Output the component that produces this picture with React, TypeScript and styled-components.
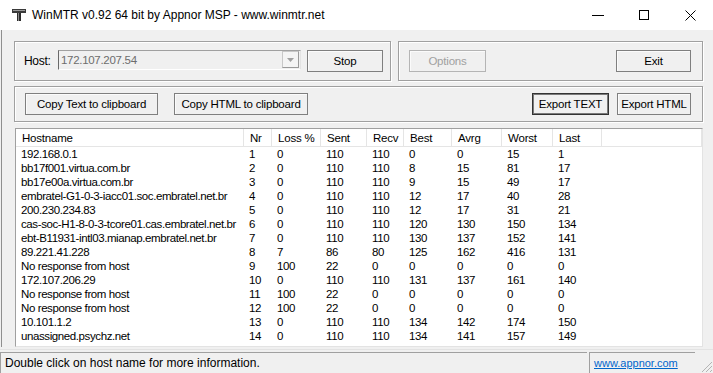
import styled, { createGlobalStyle } from "styled-components";

const GlobalStyle = createGlobalStyle`
  html, body {
    margin: 0;
    padding: 0;
    background: #ffffff;
  }
  * {
    box-sizing: border-box;
  }
`;

const Window = styled.div`
  width: 713px;
  height: 373px;
  overflow: hidden;
  display: flex;
  flex-direction: column;
  background: #f0f0f0;
  font-family: "Liberation Sans", Arial, sans-serif;
  font-size: 11px;
  color: #000;
`;

const TitleBar = styled.div`
  height: 30px;
  flex: none;
  display: flex;
  align-items: center;
  background: #ffffff;
`;

const TitleIcon = styled.svg`
  margin-left: 11px;
  width: 16px;
  height: 14px;
  flex: none;
`;

const TitleText = styled.span`
  margin-left: 5px;
  font-size: 12px;
  flex: 1;
  white-space: nowrap;
`;

const CaptionButton = styled.div`
  width: 46px;
  height: 30px;
  display: flex;
  align-items: center;
  justify-content: center;
  flex: none;
`;

const Body = styled.div`
  flex: 1;
  display: flex;
  flex-direction: column;
  margin-left: 1px;
  border-left: 1px solid #8f8f8f;
  padding: 11px 0 0 12px;
`;

const Row = styled.div<{ $gap?: number; $mb: number }>`
  display: flex;
  gap: ${(p) => p.$gap ?? 0}px;
  margin-bottom: ${(p) => p.$mb}px;
`;

const Group = styled.div<{ $w: number; $h: number; $pl: number; $pr: number }>`
  width: ${(p) => p.$w}px;
  height: ${(p) => p.$h}px;
  display: flex;
  align-items: center;
  padding: 0 ${(p) => p.$pr}px 0 ${(p) => p.$pl}px;
  border: 1px solid #a0a0a0;
  box-shadow: inset 1px 1px 0 #ffffff, 1px 1px 0 #ffffff;
`;

const Label = styled.span`
  width: 34px;
  flex: none;
  font-size: 12px;
  letter-spacing: -0.3px;
`;

const Combo = styled.div`
  width: 243px;
  height: 20px;
  margin-top: -3px;
  display: flex;
  align-items: center;
  background: #f0f0f0;
  border-top: 1px solid #a0a0a0;
  border-left: 1px solid #696969;
  border-right: 1px solid #e3e3e3;
  border-bottom: 1px solid #ffffff;
  color: #6d6d6d;
  font-size: 11.5px;
  letter-spacing: -0.3px;
  padding-left: 2px;
`;

const ComboText = styled.span`
  flex: 1;
`;

const ComboArrow = styled.div`
  width: 17px;
  height: 17px;
  margin-right: 1px;
  display: flex;
  align-items: center;
  justify-content: center;
  border: 1px solid #c8c8c8;
  border-right-color: #9a9a9a;
  border-bottom-color: #9a9a9a;
  background: #f4f4f4;
`;

const Button = styled.div<{ $w: number; $ml?: number; $default?: boolean; $disabled?: boolean }>`
  width: ${(p) => p.$w}px;
  height: 22px;
  margin-left: ${(p) => p.$ml ?? 0}px;
  flex: none;
  display: flex;
  align-items: center;
  justify-content: center;
  background: #f0f0f0;
  border: 1px solid ${(p) => (p.$default ? "#333333" : p.$disabled ? "#b4b4b4" : "#7f7f7f")};
  box-shadow: ${(p) => (p.$default ? "inset 0 0 0 1px #7a7a7a" : "inset 1px 1px 0 #fbfbfb")};
  color: ${(p) => (p.$disabled ? "#a0a0a0" : "#000")};
  font-size: 11.5px;
  letter-spacing: -0.2px;
  white-space: nowrap;
`;

const Spacer = styled.div`
  flex: 1;
`;

const List = styled.div`
  width: 688px;
  height: 219px;
  margin-left: 1px;
  background: #ffffff;
  border-top: 1px solid #a0a0a0;
  border-left: 1px solid #a0a0a0;
  border-right: 1px solid #e3e3e3;
  border-bottom: 1px solid #e3e3e3;
  overflow: hidden;
  font-size: 11.5px;
  letter-spacing: -0.4px;
`;

const cols = "228px 28px 49px 46px 37px 48px 50px 51px 49px 1fr";

const HeaderRow = styled.div`
  display: grid;
  grid-template-columns: ${cols};
  height: 18px;
  border-bottom: 1px solid #e5e5e5;
  letter-spacing: -0.2px;
`;

const HeaderCell = styled.div`
  padding-left: 6px;
  display: flex;
  align-items: center;
  border-right: 1px solid #e5e5e5;
  white-space: nowrap;
`;

const DataRow = styled.div`
  display: grid;
  grid-template-columns: ${cols};
  height: 14px;
  line-height: 14px;
`;

const Cell = styled.div`
  padding-left: 5px;
  white-space: nowrap;
`;

const StatusBar = styled.div`
  margin-top: 2px;
  height: 24px;
  flex: none;
  display: flex;
  align-items: stretch;
  border-top: 1px solid #e3e3e3;
  padding-top: 2px;
  font-size: 12px;
`;

const StatusPanel = styled.div<{ $w: number }>`
  width: ${(p) => p.$w}px;
  flex: none;
  display: flex;
  align-items: center;
  padding: 0 0 0 4px;
  margin-right: 2px;
  border-top: 1px solid #a0a0a0;
  border-left: 1px solid #a0a0a0;
`;

const Link = styled.span`
  color: #0066cc;
  text-decoration: underline;
  font-size: 11px;
`;

const Grip = styled.svg`
  margin-left: auto;
  align-self: flex-end;
  width: 14px;
  height: 14px;
`;

const rows = [
  ["192.168.0.1", "1", "0", "110", "110", "0", "0", "15", "1"],
  ["bb17f001.virtua.com.br", "2", "0", "110", "110", "8", "15", "81", "17"],
  ["bb17e00a.virtua.com.br", "3", "0", "110", "110", "9", "15", "49", "17"],
  ["embratel-G1-0-3-iacc01.soc.embratel.net.br", "4", "0", "110", "110", "12", "17", "40", "28"],
  ["200.230.234.83", "5", "0", "110", "110", "12", "17", "31", "21"],
  ["cas-soc-H1-8-0-3-tcore01.cas.embratel.net.br", "6", "0", "110", "110", "120", "130", "150", "134"],
  ["ebt-B11931-intl03.mianap.embratel.net.br", "7", "0", "110", "110", "130", "137", "152", "141"],
  ["89.221.41.228", "8", "7", "86", "80", "125", "162", "416", "131"],
  ["No response from host", "9", "100", "22", "0", "0", "0", "0", "0"],
  ["172.107.206.29", "10", "0", "110", "110", "131", "137", "161", "140"],
  ["No response from host", "11", "100", "22", "0", "0", "0", "0", "0"],
  ["No response from host", "12", "100", "22", "0", "0", "0", "0", "0"],
  ["10.101.1.2", "13", "0", "110", "110", "134", "142", "174", "150"],
  ["unassigned.psychz.net", "14", "0", "110", "110", "134", "141", "157", "149"],
];

const headers = ["Hostname", "Nr", "Loss %", "Sent", "Recv", "Best", "Avrg", "Worst", "Last", ""];

export default function App() {
  return (
    <>
      <GlobalStyle />
      <Window>
        <TitleBar>
          <TitleIcon viewBox="0 0 16 14">
            <rect x="1" y="1" width="14" height="4" fill="#3a3a3a" />
            <rect x="2" y="2" width="12" height="1" fill="#9a9a9a" />
            <rect x="6" y="5" width="4" height="8" fill="#2a2a2a" />
            <rect x="7" y="5" width="1" height="8" fill="#8a8a8a" />
          </TitleIcon>
          <TitleText>WinMTR v0.92 64 bit by Appnor MSP - www.winmtr.net</TitleText>
          <CaptionButton>
            <svg width="12" height="12" viewBox="0 0 12 12">
              <line x1="0" y1="6.5" x2="12" y2="6.5" stroke="#000" strokeWidth="1" />
            </svg>
          </CaptionButton>
          <CaptionButton>
            <svg width="11" height="11" viewBox="0 0 11 11">
              <rect x="0.5" y="0.5" width="9" height="9" fill="none" stroke="#000" strokeWidth="1" />
            </svg>
          </CaptionButton>
          <CaptionButton>
            <svg width="11" height="11" viewBox="0 0 11 11">
              <path d="M0.5 0.5 L10.5 10.5 M10.5 0.5 L0.5 10.5" stroke="#000" strokeWidth="1" />
            </svg>
          </CaptionButton>
        </TitleBar>

        <Body>
          <Row $gap={7} $mb={5}>
            <Group $w={377} $h={40} $pl={9} $pr={7}>
              <Label>Host:</Label>
              <Combo>
                <ComboText>172.107.207.54</ComboText>
                <ComboArrow>
                  <svg width="7" height="4" viewBox="0 0 7 4">
                    <path d="M0 0 H7 L3.5 4 Z" fill="#a0a0a0" />
                  </svg>
                </ComboArrow>
              </Combo>
              <Spacer />
              <Button $w={76}>Stop</Button>
            </Group>
            <Group $w={305} $h={40} $pl={10} $pr={11}>
              <Button $w={77} $disabled>
                Options
              </Button>
              <Spacer />
              <Button $w={75}>Exit</Button>
            </Group>
          </Row>

          <Row $mb={6}>
            <Group $w={689} $h={36} $pl={10} $pr={11}>
              <Button $w={133}>Copy Text to clipboard</Button>
              <Button $w={134} $ml={16}>
                Copy HTML to clipboard
              </Button>
              <Spacer />
              <Button $w={77} $default>
                Export TEXT
              </Button>
              <Button $w={74} $ml={8}>
                Export HTML
              </Button>
            </Group>
          </Row>

          <List>
            <HeaderRow>
              {headers.map((h, i) => (
                <HeaderCell key={i}>{h}</HeaderCell>
              ))}
            </HeaderRow>
            {rows.map((r, i) => (
              <DataRow key={i}>
                {r.map((c, j) => (
                  <Cell key={j}>{c}</Cell>
                ))}
              </DataRow>
            ))}
          </List>
        </Body>

        <StatusBar>
          <StatusPanel $w={587}>Double click on host name for more information.</StatusPanel>
          <StatusPanel $w={106}>
            <Link>www.appnor.com</Link>
          </StatusPanel>
          <Grip viewBox="0 0 14 14">
            <path d="M13 3 L3 13 M13 7 L7 13 M13 11 L11 13" stroke="#b4b4b4" strokeWidth="1" />
          </Grip>
        </StatusBar>
      </Window>
    </>
  );
}
